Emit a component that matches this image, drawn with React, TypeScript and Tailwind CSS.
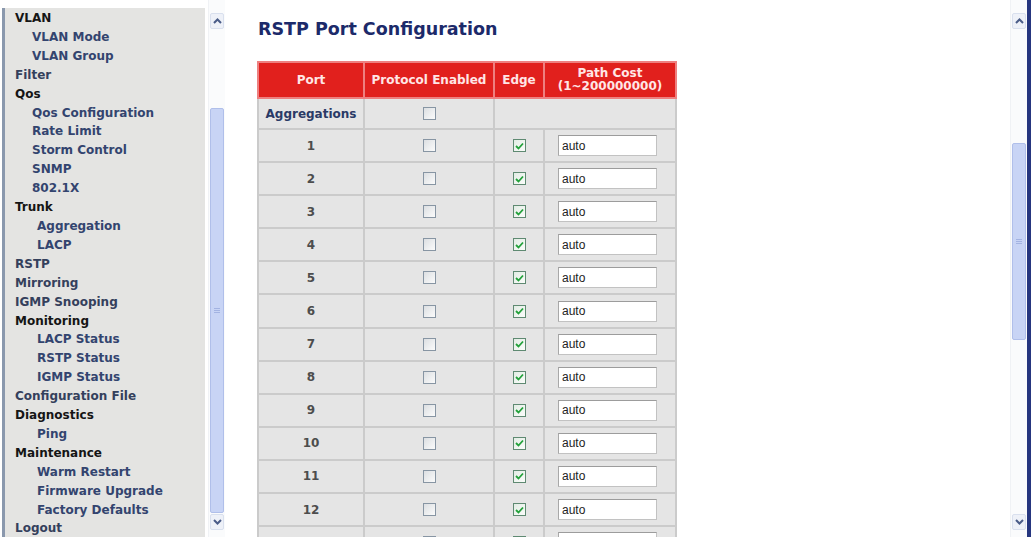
import React from "react";

type Item = { t: string; k: "h" | "l" | "s1" | "s2" };

const items: Item[] = [
  { t: "VLAN", k: "h" },
  { t: "VLAN Mode", k: "s1" },
  { t: "VLAN Group", k: "s1" },
  { t: "Filter", k: "l" },
  { t: "Qos", k: "h" },
  { t: "Qos Configuration", k: "s1" },
  { t: "Rate Limit", k: "s1" },
  { t: "Storm Control", k: "s1" },
  { t: "SNMP", k: "s1" },
  { t: "802.1X", k: "s1" },
  { t: "Trunk", k: "h" },
  { t: "Aggregation", k: "s2" },
  { t: "LACP", k: "s2" },
  { t: "RSTP", k: "l" },
  { t: "Mirroring", k: "l" },
  { t: "IGMP Snooping", k: "l" },
  { t: "Monitoring", k: "h" },
  { t: "LACP Status", k: "s2" },
  { t: "RSTP Status", k: "s2" },
  { t: "IGMP Status", k: "s2" },
  { t: "Configuration File", k: "l" },
  { t: "Diagnostics", k: "h" },
  { t: "Ping", k: "s2" },
  { t: "Maintenance", k: "h" },
  { t: "Warm Restart", k: "s2" },
  { t: "Firmware Upgrade", k: "s2" },
  { t: "Factory Defaults", k: "s2" },
  { t: "Logout", k: "l" },
];

function itemClass(k: Item["k"]) {
  if (k === "h") return "pl-[10px] text-[#151515]";
  if (k === "l") return "pl-[10px] text-[#34405c]";
  if (k === "s1") return "pl-[27px] text-[#33446f]";
  return "pl-[32px] text-[#33446f]";
}

function Chevron({ up }: { up: boolean }) {
  return (
    <svg width="9" height="6" viewBox="0 0 9 6">
      <path
        d={up ? "M1 5 L4.5 1.5 L8 5" : "M1 1 L4.5 4.5 L8 1"}
        fill="none"
        stroke="#4a5c88"
        strokeWidth="2"
      />
    </svg>
  );
}

function Scrollbar({ thumbTop, thumbH }: { thumbTop: number; thumbH: number }) {
  return (
    <div className="w-[17px] h-[537px] flex flex-col bg-[#fafbfc] border-l border-[#f0f2f5] pt-[13px]">
      <div className="h-[16px] mx-[1px] flex items-center justify-center bg-[#eef1f8] border border-[#d9e0ee] rounded-[2px]">
        <Chevron up />
      </div>
      <div className="flex-1 relative">
        <div
          className="absolute left-[1px] right-[1px] bg-[#c8d4f5] border border-[#b0bfea] rounded-[2px] flex items-center justify-center"
          style={{ top: thumbTop - 29, height: thumbH }}
        >
          <div className="flex flex-col gap-[1px]">
            <div className="w-[6px] h-[1px] bg-[#a3b3e2]" />
            <div className="w-[6px] h-[1px] bg-[#a3b3e2]" />
            <div className="w-[6px] h-[1px] bg-[#a3b3e2]" />
          </div>
        </div>
      </div>
      <div className="h-[16px] mx-[1px] mb-[7px] flex items-center justify-center bg-[#eef1f8] border border-[#d9e0ee] rounded-[2px]">
        <Chevron up={false} />
      </div>
    </div>
  );
}

function Check({ checked }: { checked?: boolean }) {
  if (checked) {
    return (
      <div className="w-[13px] h-[13px] border border-[#5f8a72] bg-gradient-to-br from-[#e2ece4] to-[#fbfdfb] flex items-center justify-center">
        <svg width="9" height="8" viewBox="0 0 9 8">
          <path d="M1 4 L3.5 6.5 L8 1.5" fill="none" stroke="#22a13a" strokeWidth="1.8" />
        </svg>
      </div>
    );
  }
  return (
    <div className="w-[13px] h-[13px] border border-[#8795a3] bg-gradient-to-br from-[#dcdfe2] to-[#fbfbfb]" />
  );
}

export default function App() {
  const rows = Array.from({ length: 13 }, (_, i) => i + 1);
  return (
    <div
      className="w-[1031px] h-[537px] overflow-hidden bg-white flex"
      style={{ fontFamily: '"DejaVu Sans", Verdana, sans-serif' }}
    >
      <div className="w-[2px]" />
      <div className="w-[3px] mt-[8px] bg-[#8a98ad]" />
      <nav className="w-[200px] mt-[8px] bg-[#e4e4e2] pt-[1px] text-[12px] font-bold leading-[18.9px]">
        {items.map((it) => (
          <div key={it.t} className={itemClass(it.k)}>
            {it.t}
          </div>
        ))}
      </nav>
      <div className="w-[3px]" />
      <Scrollbar thumbTop={108} thumbH={405} />

      <main className="flex-1 h-[537px] overflow-hidden pl-[32px]">
        <h1 className="pt-[19px] pl-[1px] text-[17.5px] leading-[20px] font-bold text-[#1c2a6a]">
          RSTP Port Configuration
        </h1>
        <table className="mt-[22px] w-[418px] table-fixed border-collapse text-[12px] font-bold">
          <colgroup>
            <col className="w-[106px]" />
            <col className="w-[130px]" />
            <col className="w-[50px]" />
            <col className="w-[132px]" />
          </colgroup>
          <thead>
            <tr className="h-[36px] bg-[#e1201d] text-[#ffe6e6]">
              <th className="border-2 border-[#ee8080] font-bold">Port</th>
              <th className="border-2 border-[#ee8080] font-bold">Protocol Enabled</th>
              <th className="border-2 border-[#ee8080] font-bold">Edge</th>
              <th className="border-2 border-[#ee8080] font-bold leading-[13px]">
                Path Cost
                <br />
                (1~200000000)
              </th>
            </tr>
          </thead>
          <tbody>
            <tr className="h-[31px] bg-[#e5e5e5]">
              <td className="border-2 border-[#cbcbcb] text-center text-[#2a3a66]">Aggregations</td>
              <td className="border-2 border-[#cbcbcb]">
                <div className="flex justify-center">
                  <Check />
                </div>
              </td>
              <td colSpan={2} className="border-2 border-[#cbcbcb]" />
            </tr>
            {rows.map((n) => (
              <tr key={n} className="h-[33.1px] bg-[#e5e5e5]">
                <td className="border-2 border-[#cbcbcb] text-center text-[#4d4d4d]">
                  {n <= 12 ? n : ""}
                </td>
                <td className="border-2 border-[#cbcbcb]">
                  <div className="flex justify-center">
                    <Check />
                  </div>
                </td>
                <td className="border-2 border-[#cbcbcb]">
                  <div className="flex justify-center">
                    <Check checked />
                  </div>
                </td>
                <td className="border-2 border-[#cbcbcb] pl-[13px]">
                  <div
                    className="w-[99px] h-[21px] bg-white border border-[#c2c2c2] border-t-[#9c9c9c] border-l-[#a8a8a8] pl-[3px] flex items-center text-[12px] font-normal text-[#222]"
                    style={{ fontFamily: '"Liberation Sans", Arial, sans-serif' }}
                  >
                    {n <= 12 ? "auto" : ""}
                  </div>
                </td>
              </tr>
            ))}
          </tbody>
        </table>
      </main>

      <Scrollbar thumbTop={143} thumbH={197} />
      <div className="w-[4px] bg-[#26367f]" />
    </div>
  );
}
